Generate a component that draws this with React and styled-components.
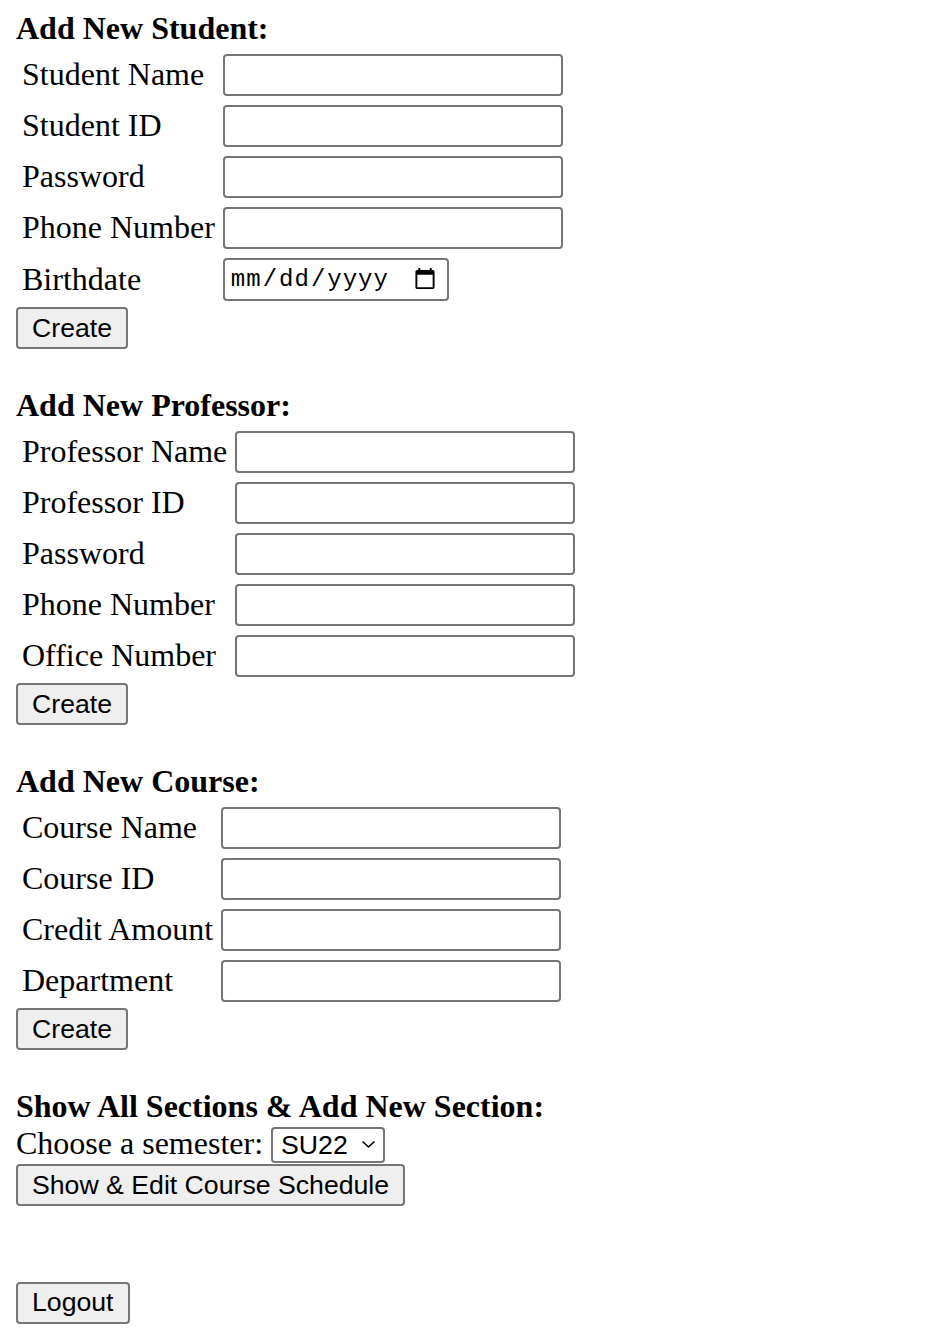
import React from "react";
import styled, { createGlobalStyle } from "styled-components";

const GlobalStyle = createGlobalStyle`
  html, body { margin: 0; padding: 0; background: #ffffff; }
  body {
    font-family: "Liberation Serif", "Times New Roman", serif;
    font-size: 32px;
    color: #000000;
  }
`;

const Page = styled.div`
  display: flex;
  flex-direction: column;
  align-items: flex-start;
  padding: 10px 16px 16px 16px;
`;

const Section = styled.form`
  display: flex;
  flex-direction: column;
  align-items: flex-start;
  margin: ${(p) => (p.$first ? "0" : "38px")} 0 0 0;
`;

const Heading = styled.b`
  display: block;
  font-weight: 700;
  font-size: 32px;
  line-height: 37px;
`;

const FieldGrid = styled.div`
  display: grid;
  grid-template-columns: max-content max-content;
  column-gap: 8px;
  row-gap: 9px;
  align-items: center;
  margin: 6.5px 0 0 6px;
`;

const Label = styled.label`
  font-size: 32px;
  line-height: 37px;
`;

const TextInput = styled.input`
  box-sizing: border-box;
  width: ${(p) => p.$width || 340}px;
  height: 42px;
  margin: 0;
  padding: 2px 6px;
  border: 2px solid #767676;
  border-radius: 4px;
  background: #ffffff;
  font-family: "Liberation Sans", Arial, sans-serif;
  font-size: 26.67px;
  color: #000000;
  outline: none;
`;

const DateInput = styled(TextInput)`
  font-family: "Liberation Mono", "DejaVu Sans Mono", monospace;
  font-size: 24px;
  letter-spacing: 1px;
  padding: 2px 8px 2px 5px;
  height: 43px;
`;

const Button = styled.button`
  box-sizing: border-box;
  height: 42px;
  margin: ${(p) => p.$mt || 6.5}px 0 0 0;
  padding: 0 14px;
  border: 2px solid #767676;
  border-radius: 4px;
  background: #efefef;
  font-family: "Liberation Sans", Arial, sans-serif;
  font-size: 26.67px;
  line-height: normal;
  color: #000000;
  cursor: pointer;
`;

const SemesterRow = styled.div`
  font-size: 32px;
  line-height: 37px;
`;

const SelectWrap = styled.span`
  position: relative;
  display: inline-block;
  vertical-align: baseline;
`;

const Select = styled.select`
  appearance: none;
  -webkit-appearance: none;
  box-sizing: border-box;
  width: 114px;
  height: 36px;
  margin: 0;
  padding: 0 30px 0 8px;
  border: 2px solid #767676;
  border-radius: 4px;
  background: #ffffff;
  font-family: "Liberation Sans", Arial, sans-serif;
  font-size: 26.67px;
  color: #000000;
  outline: none;
`;

const Chevron = styled.svg`
  position: absolute;
  right: 9px;
  top: 50%;
  margin-top: -4px;
  width: 15px;
  height: 9px;
  pointer-events: none;
`;

const studentFields = ["Student Name", "Student ID", "Password", "Phone Number"];
const professorFields = [
  "Professor Name",
  "Professor ID",
  "Password",
  "Phone Number",
  "Office Number",
];
const courseFields = ["Course Name", "Course ID", "Credit Amount", "Department"];

function Fields({ labels, prefix, children }) {
  return (
    <FieldGrid>
      {labels.map((l, i) => (
        <React.Fragment key={l}>
          <Label htmlFor={`${prefix}-${i}`}>{l}</Label>
          <TextInput
            id={`${prefix}-${i}`}
            type={l === "Password" ? "password" : "text"}
          />
        </React.Fragment>
      ))}
      {children}
    </FieldGrid>
  );
}

export default function App() {
  return (
    <>
      <GlobalStyle />
      <Page>
        <Section $first onSubmit={(e) => e.preventDefault()}>
          <Heading>Add New Student:</Heading>
          <Fields labels={studentFields} prefix="stu">
            <Label htmlFor="stu-birth">Birthdate</Label>
            <DateInput id="stu-birth" type="date" $width={226} />
          </Fields>
          <Button type="submit">Create</Button>
        </Section>

        <Section onSubmit={(e) => e.preventDefault()}>
          <Heading>Add New Professor:</Heading>
          <Fields labels={professorFields} prefix="prof" />
          <Button type="submit">Create</Button>
        </Section>

        <Section onSubmit={(e) => e.preventDefault()}>
          <Heading>Add New Course:</Heading>
          <Fields labels={courseFields} prefix="course" />
          <Button type="submit">Create</Button>
        </Section>

        <Section onSubmit={(e) => e.preventDefault()}>
          <Heading>Show All Sections &amp; Add New Section:</Heading>
          <SemesterRow>
            Choose a semester:{" "}
            <SelectWrap>
              <Select defaultValue="SU22">
                <option value="SU22">SU22</option>
                <option value="FA22">FA22</option>
                <option value="SP23">SP23</option>
              </Select>
              <Chevron viewBox="0 0 15 9">
                <polyline
                  points="1.5,1.5 7.5,7 13.5,1.5"
                  fill="none"
                  stroke="#000"
                  strokeWidth="1.6"
                />
              </Chevron>
            </SelectWrap>
          </SemesterRow>
          <Button type="button" $mt={1}>
            Show &amp; Edit Course Schedule
          </Button>
        </Section>

        <Button type="button" $mt={75.5}>
          Logout
        </Button>
      </Page>
    </>
  );
}
